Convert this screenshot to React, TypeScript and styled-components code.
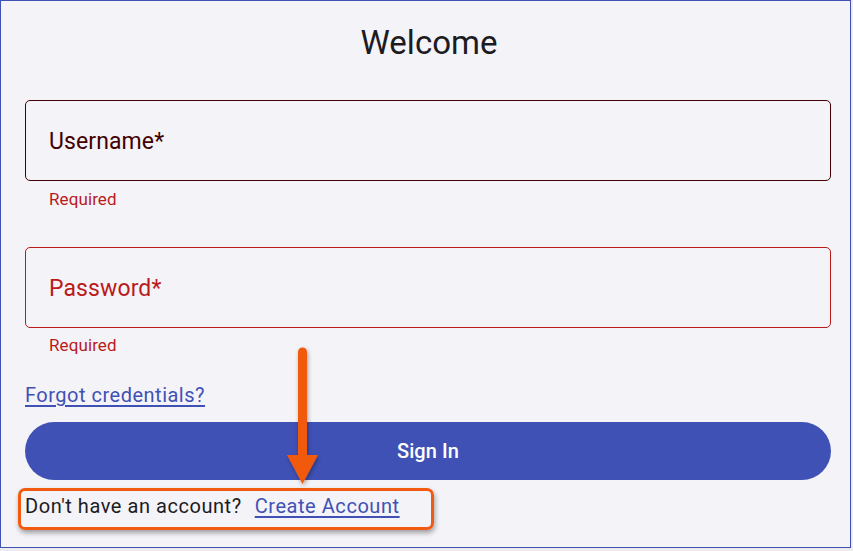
import { createGlobalStyle, styled } from 'styled-components';

const GlobalStyle = createGlobalStyle`
  html, body {
    margin: 0;
    padding: 0;
    background: #ececf0;
  }
  body {
    font-family: Roboto, "Liberation Sans", Arial, sans-serif;
  }
`;

const Frame = styled.div`
  position: relative;
  box-sizing: border-box;
  width: 851px;
  height: 548px;
  border: 1px solid #3f51b5;
  background: #f4f3f8;
  padding: 20px 19px 0 24px;
  display: flex;
  flex-direction: column;
`;

const Title = styled.h1`
  margin: 0 0 35px;
  font-size: 33px;
  font-weight: 400;
  line-height: 44px;
  color: #1c1b1f;
  text-align: center;
  padding-left: 2px;
`;

const FieldBox = styled.div<{ $tone: 'dark' | 'error' }>`
  box-sizing: border-box;
  height: 81px;
  border: 1px solid ${(p) => (p.$tone === 'dark' ? '#410002' : '#ba1a1a')};
  border-radius: 5px;
  display: flex;
  align-items: center;
  padding: 1px 0 0 23px;
  font-size: 23px;
  letter-spacing: 0.1px;
  color: ${(p) => (p.$tone === 'dark' ? '#410002' : '#ba1a1a')};
`;

const Helper = styled.div<{ $top: number; $gap: number }>`
  margin: ${(p) => p.$top}px 0 ${(p) => p.$gap}px 24px;
  font-size: 17px;
  line-height: 20px;
  letter-spacing: 0.1px;
  color: #ba1a1a;
`;

const Link = styled.a`
  color: #3f51b5;
  text-decoration: underline;
  text-underline-offset: 3px;
  cursor: pointer;
`;

const Forgot = styled.div`
  font-size: 20px;
  line-height: 28px;
  letter-spacing: 0.5px;
  margin-bottom: 13px;
`;

const SignIn = styled.button`
  height: 58px;
  border: none;
  border-radius: 29px;
  background: #3f51b5;
  color: #ffffff;
  font-family: inherit;
  font-size: 20px;
  font-weight: 500;
  letter-spacing: 0.1px;
  cursor: pointer;
`;

const Footer = styled.div`
  margin-top: 12px;
  display: flex;
  align-items: center;
  gap: 13px;
  font-size: 20px;
  line-height: 28px;
  letter-spacing: 0.55px;
  color: #1c1b1f;
`;

const Highlight = styled.div`
  position: absolute;
  left: 17px;
  top: 487px;
  width: 416px;
  height: 42px;
  box-sizing: border-box;
  border: 3px solid #f15a0f;
  border-radius: 7px;
  box-shadow: 1px 3px 5px rgba(0, 0, 0, 0.35);
  pointer-events: none;
`;

const Arrow = styled.svg`
  position: absolute;
  left: 276px;
  top: 339px;
  overflow: visible;
  pointer-events: none;
`;

export default function App() {
  return (
    <>
      <GlobalStyle />
      <Frame>
        <Title>Welcome</Title>
        <FieldBox $tone="dark">Username*</FieldBox>
        <Helper $top={8} $gap={38}>
          Required
        </Helper>
        <FieldBox $tone="error">Password*</FieldBox>
        <Helper $top={7} $gap={26}>
          Required
        </Helper>
        <Forgot>
          <Link>Forgot credentials?</Link>
        </Forgot>
        <SignIn>Sign In</SignIn>
        <Footer>
          <span>Don&apos;t have an account?</span>
          <Link>Create Account</Link>
        </Footer>
        <Highlight />
        <Arrow width="56" height="150" viewBox="0 0 56 150">
          <defs>
            <filter id="arrowShadow" x="-50%" y="-20%" width="200%" height="140%">
              <feDropShadow dx="1" dy="2" stdDeviation="2" floodColor="#000" floodOpacity="0.35" />
            </filter>
          </defs>
          <g filter="url(#arrowShadow)" fill="#f15a0f" stroke="none">
            <path d="M21 12 a4.5 4.5 0 0 1 9 0 V117 H21 Z" />
            <path d="M10 115 H41 L25.5 144 Z" />
          </g>
        </Arrow>
      </Frame>
    </>
  );
}
